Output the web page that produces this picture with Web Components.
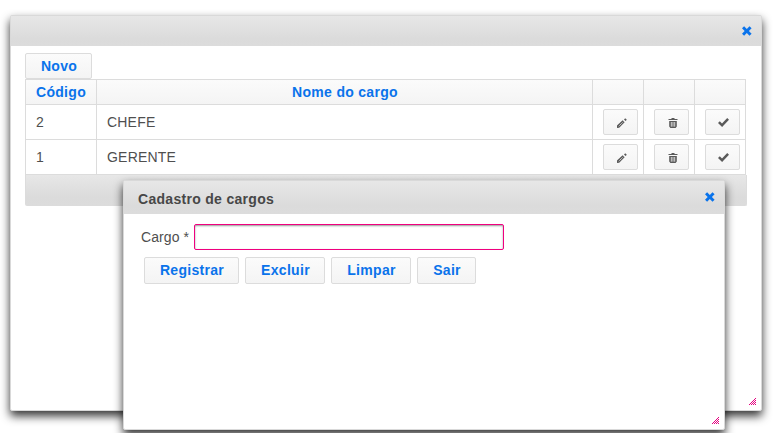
<!DOCTYPE html>
<html lang="pt-BR">
<head>
<meta charset="utf-8">
<title>Cadastro de cargos</title>
<style>
body{margin:0;width:781px;height:433px;overflow:hidden;position:relative;background:#fff;color:#4f4f4f;font:14px/17px "Liberation Sans",Arial,sans-serif}
#list{position:absolute;left:10px;top:15px;width:752px;height:396px}
#form{position:absolute;left:123px;top:180px;width:602px;height:250px;--bar:33px;--title-top:4px}
.list{display:flex;flex-direction:column;align-items:flex-start;padding:7px 14px}
.form{padding:10px 17px}
.field{display:flex;align-items:center;height:26px}
.field span{width:53px;letter-spacing:.08px}
.actions{display:flex;gap:6px;padding:7px 3px}
.actions ui-button{height:27px}
</style>
</head>
<body>
<ui-window id="list"><div class="list"><ui-button style="width:67px">Novo</ui-button><role-table></role-table></div></ui-window>
<ui-window id="form" heading="Cadastro de cargos"><div class="form">
<div class="field"><span>Cargo *</span><text-field></text-field></div>
<div class="actions"><ui-button style="width:95px">Registrar</ui-button><ui-button style="width:80px">Excluir</ui-button><ui-button style="width:80px">Limpar</ui-button><ui-button style="width:59px">Sair</ui-button></div>
</div></ui-window>
<script>
class Base extends HTMLElement{
  constructor(){super();this.attachShadow({mode:'open'});}
  connectedCallback(){this.shadowRoot.innerHTML=this.render();}
}
const icons={
  close:[10,10,'<path d="M0 2.2 2.2 0 5 2.8 7.8 0 10 2.2 7.2 5 10 7.8 7.8 10 5 7.2 2.2 10 0 7.8 2.8 5z" transform="translate(0 .2) scale(.96)"/>'],
  edit:[10,10,'<path d="M0 10V7.6L5.6 2.2l2 2L2.2 9.8z"/><path d="M7 1.5 8.2 .2l1.6 1.6-1.2 1.3z"/><path d="M1.8 8.2 6.2 3.9" stroke="#e8e8e8" stroke-width="1" stroke-dasharray="1.1 .7"/>'],
  trash:[10,10,'<path d="M.5 1H3.5V0H6.5V1H9.5V2H.5zM1.2 3H8.8V8.6L7.6 10H2.4L1.2 8.6z"/><path d="M3.3 4V8.7M5 4V8.7M6.7 4V8.7" stroke="#f4f4f4" stroke-width=".8"/>'],
  check:[11,10,'<path d="M0 5 1.8 3.3 4 5.5 9.2 0 11 1.8 4.1 9z"/>']
};
customElements.define('ui-icon',class extends Base{render(){
  const [w,h,p]=icons[this.getAttribute('name')];
  return `<style>:host{display:block;flex:none;width:${w}px;height:${h}px}svg{display:block;fill:currentColor}</style><svg width="${w}" height="${h}" viewBox="0 0 ${w} ${h}">${p}</svg>`;
}});
customElements.define('ui-button',class extends Base{render(){
  return `<style>:host{display:flex;flex:none;box-sizing:border-box;height:26px;align-items:center;justify-content:center;border:1px solid #dcdcdc;border-radius:2px;background:linear-gradient(#fbfbfb,#f4f4f4);color:#0a73eb;font-weight:bold;letter-spacing:.3px;padding-left:1px}</style><slot></slot>`;
}});
customElements.define('text-field',class extends Base{render(){
  return `<style>:host{display:block}input{display:block;box-sizing:border-box;width:310px;height:26px;margin:0;padding:3px;border:1px solid #f0007f;border-radius:2px;outline:0;font:inherit;box-shadow:inset 0 1px 2px #999;background:#fff}</style><input type="text">`;
}});
customElements.define('ui-window',class extends Base{render(){
  let dots='';
  for(let y=0;y<7;y++)for(let x=0;x<7;x++)if(x+y>=6&&(x+y)%2===0)dots+=`<rect x="${x}" y="${y}" width="1" height="1"/>`;
  return `<style>
:host{display:flex;flex-direction:column;box-sizing:border-box;background:#fff;border:1px solid #d9d9d9;border-radius:2px;box-shadow:0 5px 10px rgba(0,0,0,.8)}
header{display:flex;flex:none;box-sizing:border-box;height:var(--bar,30px);align-items:center;justify-content:space-between;padding:var(--title-top,1px) 9px 0 14px;background:linear-gradient(#e7e7e7,#dbdbdb 75%,#dcdcdc);color:#474747;font-weight:bold;letter-spacing:.3px}
ui-icon{color:#0a73eb;margin-top:calc(-1px - var(--title-top,1px))}
main{flex:1;min-height:0}
footer{display:flex;justify-content:flex-end;padding:0 5px 5px 0}
footer svg{display:block;fill:#e4007f}
</style><header><span>${this.getAttribute('heading')||''}</span><ui-icon name="close"></ui-icon></header><main><slot></slot></main><footer><svg width="7" height="7" shape-rendering="crispEdges">${dots}</svg></footer>`;
}});
customElements.define('role-table',class extends Base{render(){
  const rows=[[2,'CHEFE'],[1,'GERENTE']];
  return `<style>
:host{display:block;width:722px}
.row{display:grid;width:721px;box-sizing:border-box;grid-template-columns:71px 496px 51px 51px 51px;border-left:1px solid #dcdcdc;height:35px}
.row>div{display:flex;align-items:center;box-sizing:border-box;padding:0 5px 0 10px;border-right:1px solid #dcdcdc;border-bottom:1px solid #dcdcdc;letter-spacing:.2px}
.head{height:26px;border-top:1px solid #dcdcdc;background:linear-gradient(#fbfbfb,#f4f4f4);color:#0a73eb;font-weight:bold}
.row.head>div{justify-content:center;padding:0 10px;letter-spacing:.3px}
.row.head>div:nth-child(2){padding-left:11px}
ui-button{width:35px;color:#5a5a5a}
ui-icon{margin:1px 0 0 1px}
.foot{height:31px;box-sizing:border-box;border:1px solid #dcdcdc;border-top:0;border-radius:0 0 2px 2px;background:linear-gradient(#e7e7e7,#dbdbdb 75%,#dcdcdc)}
</style><div class="row head"><div>Código</div><div>Nome do cargo</div><div></div><div></div><div></div></div>
${rows.map(r=>`<div class="row"><div>${r[0]}</div><div>${r[1]}</div>${['edit','trash','check'].map(i=>`<div><ui-button><ui-icon name="${i}"></ui-icon></ui-button></div>`).join('')}</div>`).join('')}
<div class="foot"></div>`;
}});
</script>
</body>
</html>
